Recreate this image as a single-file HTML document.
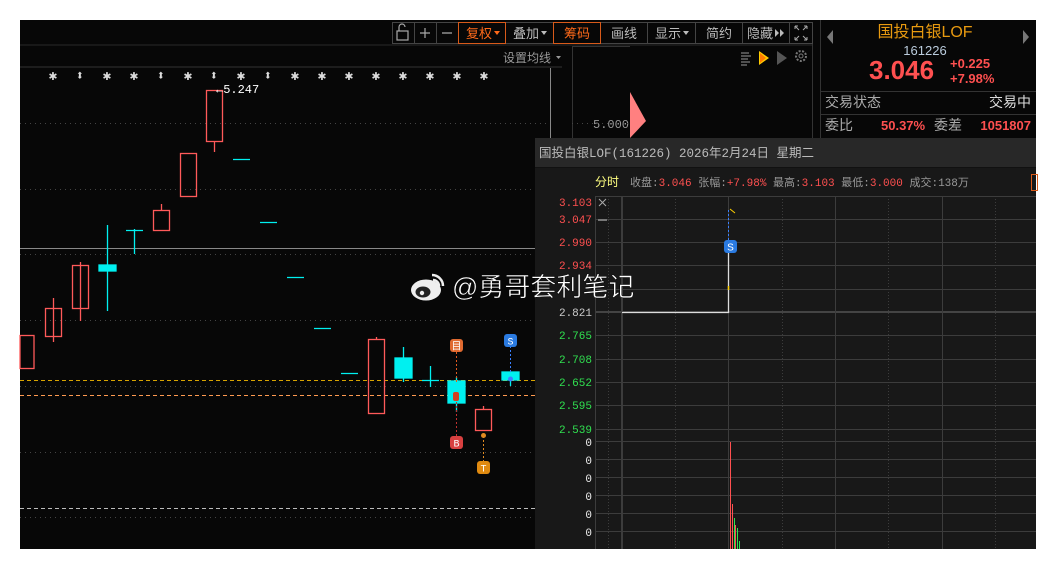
<!DOCTYPE html>
<html><head><meta charset="utf-8"><style>
html,body{margin:0;padding:0;background:#fff;width:1056px;height:569px;overflow:hidden}
svg{display:block}
text{font-family:"Liberation Mono","Noto Sans CJK SC",monospace}
.c{font-family:"Liberation Sans","Noto Sans CJK SC",sans-serif}
</style></head><body>
<svg width="1056" height="569" viewBox="0 0 1056 569" xmlns="http://www.w3.org/2000/svg">
<rect x="20" y="20" width="1016" height="529" fill="#070707"/>
<line x1="20" y1="45" x2="812" y2="45" stroke="#2a2a2a"/>
<g stroke="#444" fill="none">
<rect x="392.5" y="22.5" width="420" height="21"/>
<line x1="414.5" y1="22" x2="414.5" y2="44"/><line x1="436.5" y1="22" x2="436.5" y2="44"/>
<line x1="553.5" y1="22" x2="553.5" y2="44"/><line x1="647.5" y1="22" x2="647.5" y2="44"/>
<line x1="695.5" y1="22" x2="695.5" y2="44"/><line x1="742.5" y1="22" x2="742.5" y2="44"/><line x1="789.5" y1="22" x2="789.5" y2="44"/>
</g>
<rect x="458.5" y="22.5" width="47" height="21" fill="none" stroke="#d85a1a"/>
<rect x="553.5" y="22.5" width="47" height="21" fill="none" stroke="#d85a1a"/>
<g stroke="#aaa" fill="none" stroke-width="1.2">
<rect x="397" y="31" width="11" height="9"/><path d="M399 31v-4a3 3 0 0 1 6 0"/>
<path d="M420 33h10M425 28v10M442 33h10"/>
<path d="M795 26l4 4M795 26h3M795 26v3M807 26l-4 4M807 26h-3M807 26v3M795 40l4-4M795 40h3M795 40v-3M807 40l-4-4M807 40h-3M807 40v-3" stroke-width="1"/>
</g>
<g class="c" font-size="13" fill="#bbb">
<text x="466" y="38" fill="#ff6a1a">复权</text><polygon points="494,31 500,31 497,35" fill="#ff6a1a"/>
<text x="513" y="38">叠加</text><polygon points="541,31 547,31 544,35" fill="#bbb"/>
<text x="564" y="38" fill="#ff6a1a">筹码</text>
<text x="611" y="38">画线</text>
<text x="655" y="38">显示</text><polygon points="683,31 689,31 686,35" fill="#bbb"/>
<text x="706" y="38">简约</text>
<text x="747" y="38">隐藏</text><polygon points="775,29 779,33 775,37" fill="#bbb"/><polygon points="780,29 784,33 780,37" fill="#bbb"/>
<text x="503" y="62" font-size="12" fill="#999">设置均线</text><polygon points="556,56 561,56 558.5,59" fill="#999"/>
</g>
<line x1="20" y1="67" x2="562" y2="67" stroke="#333"/>
<line x1="550.5" y1="68" x2="550.5" y2="549" stroke="#888"/>
<line x1="572.5" y1="46" x2="572.5" y2="138" stroke="#333"/>
<line x1="572" y1="46.5" x2="630" y2="46.5" stroke="#333"/>
<line x1="812.5" y1="44" x2="812.5" y2="138" stroke="#333"/>
<g stroke="#999"><path d="M741 53h8M741 56h10M741 59h7M741 62h9M741 65h6"/></g>
<polygon points="759,51 769,58 759,65" fill="#ffcc00"/><polygon points="760,53 766,58 760,63" fill="#ff7a00"/>
<polygon points="777,51 787,58 777,65" fill="#555"/>
<circle cx="801" cy="56" r="5" fill="none" stroke="#777" stroke-width="2" stroke-dasharray="2 1.5"/><circle cx="801" cy="56" r="2" fill="none" stroke="#777"/>
<polygon points="630,92 646,121 630,138" fill="#ff8080"/>
<text x="593" y="128" font-size="12" fill="#999">5.000</text>
<g stroke="#444" stroke-dasharray="1 4">
<line x1="20" y1="123.5" x2="550" y2="123.5"/><line x1="20" y1="189.5" x2="550" y2="189.5"/>
<line x1="20" y1="254.5" x2="535" y2="254.5"/><line x1="20" y1="320.5" x2="535" y2="320.5"/>
<line x1="20" y1="386.5" x2="535" y2="386.5"/><line x1="20" y1="452.5" x2="535" y2="452.5"/>
<line x1="20" y1="517.5" x2="535" y2="517.5"/><line x1="572" y1="123.5" x2="630" y2="123.5"/>
</g>
<line x1="20" y1="248.5" x2="535" y2="248.5" stroke="#888"/>
<line x1="20" y1="380.5" x2="535" y2="380.5" stroke="#d9a400" stroke-dasharray="4 3"/>
<line x1="20" y1="395.5" x2="535" y2="395.5" stroke="#ff9a50" stroke-dasharray="4 3"/>
<line x1="20" y1="508.5" x2="535" y2="508.5" stroke="#bbb" stroke-dasharray="4 3"/>
<g fill="#ddd" font-size="14" font-weight="bold" text-anchor="middle" class="c">
<text x="53" y="80">✱</text><text x="80" y="80">⬍</text><text x="107" y="80">✱</text><text x="134" y="80">✱</text><text x="161" y="80">⬍</text><text x="188" y="80">✱</text><text x="214" y="80">⬍</text><text x="241" y="80">✱</text><text x="268" y="80">⬍</text><text x="295" y="80">✱</text><text x="322" y="80">✱</text><text x="349" y="80">✱</text><text x="376" y="80">✱</text><text x="403" y="80">✱</text><text x="430" y="80">✱</text><text x="457" y="80">✱</text><text x="484" y="80">✱</text>
</g>
<g stroke="#ff5a5a" fill="none" stroke-width="1.3">
<rect x="20" y="335.5" width="14" height="33"/>
<line x1="53.5" y1="298" x2="53.5" y2="342"/><rect x="45.5" y="308.5" width="16" height="28"/>
<line x1="80.5" y1="262" x2="80.5" y2="321"/><rect x="72.5" y="265.5" width="16" height="43"/>
<line x1="161.5" y1="204" x2="161.5" y2="210"/><rect x="153.5" y="210.5" width="16" height="20"/>
<rect x="180.5" y="153.5" width="16" height="43"/>
<line x1="214.5" y1="141" x2="214.5" y2="152"/><rect x="206.5" y="90.5" width="16" height="51"/>
<line x1="376.5" y1="337" x2="376.5" y2="340"/><rect x="368.5" y="339.5" width="16" height="74"/>
<line x1="483.5" y1="406" x2="483.5" y2="410"/><rect x="475.5" y="409.5" width="16" height="21"/>
</g>
<g stroke="#00f0f0" stroke-width="1.3">
<line x1="107.5" y1="225" x2="107.5" y2="311"/><rect x="99" y="265" width="17" height="6" fill="#00f0f0"/>
<line x1="126" y1="230.5" x2="143" y2="230.5"/><line x1="134.5" y1="229" x2="134.5" y2="254"/>
<line x1="233" y1="159.5" x2="250" y2="159.5"/><line x1="260" y1="222.5" x2="277" y2="222.5"/>
<line x1="287" y1="277.5" x2="304" y2="277.5"/><line x1="314" y1="328.5" x2="331" y2="328.5"/>
<line x1="341" y1="373.5" x2="358" y2="373.5"/>
<line x1="403.5" y1="347" x2="403.5" y2="382"/><rect x="395" y="358" width="17" height="20" fill="#00f0f0"/>
<line x1="422" y1="380.5" x2="439" y2="380.5"/><line x1="430.5" y1="366" x2="430.5" y2="387"/>
<line x1="456.5" y1="377" x2="456.5" y2="412"/><rect x="448" y="381" width="17" height="22" fill="#00f0f0"/>
<line x1="510.5" y1="378" x2="510.5" y2="386"/><rect x="502" y="372" width="17" height="8" fill="#00f0f0"/>
</g>
<text x="216" y="93" font-size="12" fill="#fff">←5.247</text>
<line x1="456.5" y1="352" x2="456.5" y2="382" stroke="#e05a20" stroke-dasharray="2 2"/>
<line x1="456.5" y1="402" x2="456.5" y2="437" stroke="#c03030" stroke-dasharray="2 2"/>
<line x1="483.5" y1="436" x2="483.5" y2="461" stroke="#e08a20" stroke-dasharray="2 2"/>
<line x1="510.5" y1="346" x2="510.5" y2="372" stroke="#3a80ff" stroke-dasharray="2 2"/>
<rect x="453" y="392" width="6" height="9" rx="2" fill="#d04020"/>
<circle cx="483.5" cy="435.5" r="2.5" fill="#e08a20"/><circle cx="510.5" cy="379" r="2.5" fill="#3a80ff"/>
<g class="c" font-size="10" text-anchor="middle" fill="#fff">
<rect x="450" y="339" width="13" height="13" rx="3" fill="#e06a30"/><text x="456.5" y="349.5">目</text>
<rect x="450" y="436" width="13" height="13" rx="3" fill="#d84040"/><text x="456.5" y="446.5">B</text>
<rect x="477" y="461" width="13" height="13" rx="3" fill="#e08a10"/><text x="483.5" y="471.5">T</text>
<rect x="504" y="334" width="13" height="13" rx="3" fill="#2a7ae0"/><text x="510.5" y="344.5">S</text>
</g>
<line x1="820.5" y1="20" x2="820.5" y2="138" stroke="#333"/>
<polygon points="833,30 827,37 833,44" fill="#777"/><polygon points="1023,30 1029,37 1023,44" fill="#777"/>
<text x="925" y="37" class="c" font-size="16" fill="#e89a10" text-anchor="middle">国投白银LOF</text>
<text x="925" y="55" class="c" font-size="13" fill="#bcd" text-anchor="middle">161226</text>
<text x="869" y="79" class="c" font-size="26" font-weight="bold" fill="#ff5050">3.046</text>
<text x="950" y="68" class="c" font-size="13" font-weight="bold" fill="#ff5050">+0.225</text>
<text x="950" y="83" class="c" font-size="13" font-weight="bold" fill="#ff5050">+7.98%</text>
<line x1="820" y1="91.5" x2="1036" y2="91.5" stroke="#333"/>
<text x="825" y="107" class="c" font-size="14" fill="#aaa">交易状态</text>
<text x="1031" y="107" class="c" font-size="14" fill="#ddd" text-anchor="end">交易中</text>
<line x1="820" y1="114.5" x2="1036" y2="114.5" stroke="#333"/>
<text x="825" y="130" class="c" font-size="14" fill="#aaa">委比</text>
<text x="881" y="130" class="c" font-size="13" font-weight="bold" fill="#ff5050">50.37%</text>
<text x="934" y="130" class="c" font-size="14" fill="#aaa">委差</text>
<text x="1031" y="130" class="c" font-size="13" font-weight="bold" fill="#ff5050" text-anchor="end">1051807</text>
<rect x="535" y="138" width="501" height="411" fill="#181818"/>
<rect x="535" y="138" width="501" height="29" fill="#282828"/>
<line x1="535" y1="167.5" x2="1036" y2="167.5" stroke="#111"/>
<text x="539" y="157" font-size="12.5" fill="#bbb">国投白银LOF(161226) 2026年2月24日 星期二</text>
<text x="595" y="186" font-size="12" fill="#ffff80">分时</text>
<text x="630" y="186" font-size="11" fill="#999">收盘:<tspan fill="#ff5050">3.046</tspan> 张幅:<tspan fill="#ff5050">+7.98%</tspan> 最高:<tspan fill="#ff5050">3.103</tspan> 最低:<tspan fill="#ff5050">3.000</tspan> 成交:138万</text>
<rect x="1031.5" y="174.5" width="6" height="16" fill="none" stroke="#d85a1a"/>
<g stroke="#3c3c3c">
<line x1="595" y1="196.5" x2="1036" y2="196.5"/>
<line x1="595" y1="219.5" x2="1036" y2="219.5"/><line x1="595" y1="242.5" x2="1036" y2="242.5"/>
<line x1="595" y1="265.5" x2="1036" y2="265.5"/><line x1="595" y1="289.5" x2="1036" y2="289.5"/>
<line x1="595" y1="312" x2="1036" y2="312" stroke-width="2" stroke="#444"/><line x1="595" y1="335.5" x2="1036" y2="335.5"/>
<line x1="595" y1="359.5" x2="1036" y2="359.5"/><line x1="595" y1="382.5" x2="1036" y2="382.5"/>
<line x1="595" y1="405.5" x2="1036" y2="405.5"/><line x1="595" y1="429.5" x2="1036" y2="429.5"/>
<line x1="595" y1="441.5" x2="1036" y2="441.5"/><line x1="595" y1="459.5" x2="1036" y2="459.5"/>
<line x1="595" y1="477.5" x2="1036" y2="477.5"/><line x1="595" y1="495.5" x2="1036" y2="495.5"/>
<line x1="595" y1="513.5" x2="1036" y2="513.5"/><line x1="595" y1="531.5" x2="1036" y2="531.5"/>
<line x1="595.5" y1="196" x2="595.5" y2="549"/>
<line x1="622" y1="196" x2="622" y2="549" stroke-width="2"/>
<line x1="728.5" y1="196" x2="728.5" y2="549"/><line x1="835.5" y1="196" x2="835.5" y2="549"/><line x1="942.5" y1="196" x2="942.5" y2="549"/>
</g>
<g stroke="#3c3c3c" stroke-dasharray="1 2">
<line x1="608.5" y1="196" x2="608.5" y2="549"/><line x1="675.5" y1="196" x2="675.5" y2="549"/>
<line x1="782.5" y1="196" x2="782.5" y2="549"/><line x1="888.5" y1="196" x2="888.5" y2="549"/><line x1="995.5" y1="196" x2="995.5" y2="549"/>
</g>
<g font-size="11" text-anchor="end">
<text x="592" y="206" fill="#ff5050">3.103</text><text x="592" y="223" fill="#ff5050">3.047</text>
<text x="592" y="246" fill="#ff5050">2.990</text><text x="592" y="269" fill="#ff5050">2.934</text>
<text x="592" y="316" fill="#ccc">2.821</text>
<text x="592" y="339" fill="#30e050">2.765</text><text x="592" y="363" fill="#30e050">2.708</text>
<text x="592" y="386" fill="#30e050">2.652</text><text x="592" y="409" fill="#30e050">2.595</text>
<text x="592" y="433" fill="#30e050">2.539</text>
<g fill="#eee"><text x="592" y="446">0</text><text x="592" y="464">0</text><text x="592" y="482">0</text><text x="592" y="500">0</text><text x="592" y="518">0</text><text x="592" y="536">0</text></g>
</g>
<path d="M599 199l7 7M606 199l-7 7" stroke="#aaa"/>
<path d="M598 220h9" stroke="#777" stroke-width="2"/>
<path d="M622 312.5H728.5V244" stroke="#ddd" fill="none" stroke-width="1.3"/>
<line x1="728.5" y1="210" x2="728.5" y2="244" stroke="#3a80ff" stroke-dasharray="2 2"/>
<line x1="728.5" y1="286" x2="728.5" y2="290" stroke="#ffd000" stroke-width="1.5"/>
<path d="M730 209l5 4" stroke="#ffd000"/>
<rect x="724" y="240" width="13" height="13" rx="3" fill="#2a7ae0"/><text x="730.5" y="250.5" class="c" font-size="10" fill="#fff" text-anchor="middle">S</text>
<g stroke-width="1">
<line x1="730.5" y1="442" x2="730.5" y2="549" stroke="#ff5050"/>
<line x1="732.5" y1="504" x2="732.5" y2="549" stroke="#ff5050"/>
<line x1="734.5" y1="518" x2="734.5" y2="549" stroke="#30e050"/>
<line x1="735.5" y1="525" x2="735.5" y2="549" stroke="#ff5050"/>
<line x1="737.5" y1="528" x2="737.5" y2="549" stroke="#30e050"/>
<line x1="739.5" y1="541" x2="739.5" y2="549" stroke="#30e050"/>
</g>
<g>
<ellipse cx="426" cy="290" rx="15" ry="10.5" fill="#eee"/>
<ellipse cx="423" cy="292" rx="7.5" ry="5.5" fill="#222"/><circle cx="422" cy="293" r="2.2" fill="#eee"/>
<path d="M432 275a11 11 0 0 1 11 11M433 280a6 6 0 0 1 6 6" stroke="#eee" stroke-width="2.5" fill="none"/>
</g>
<text x="452" y="296" class="c" font-size="26" fill="#fff" stroke="#000" stroke-width="0.5">@勇哥套利笔记</text>
</svg>
</body></html>
